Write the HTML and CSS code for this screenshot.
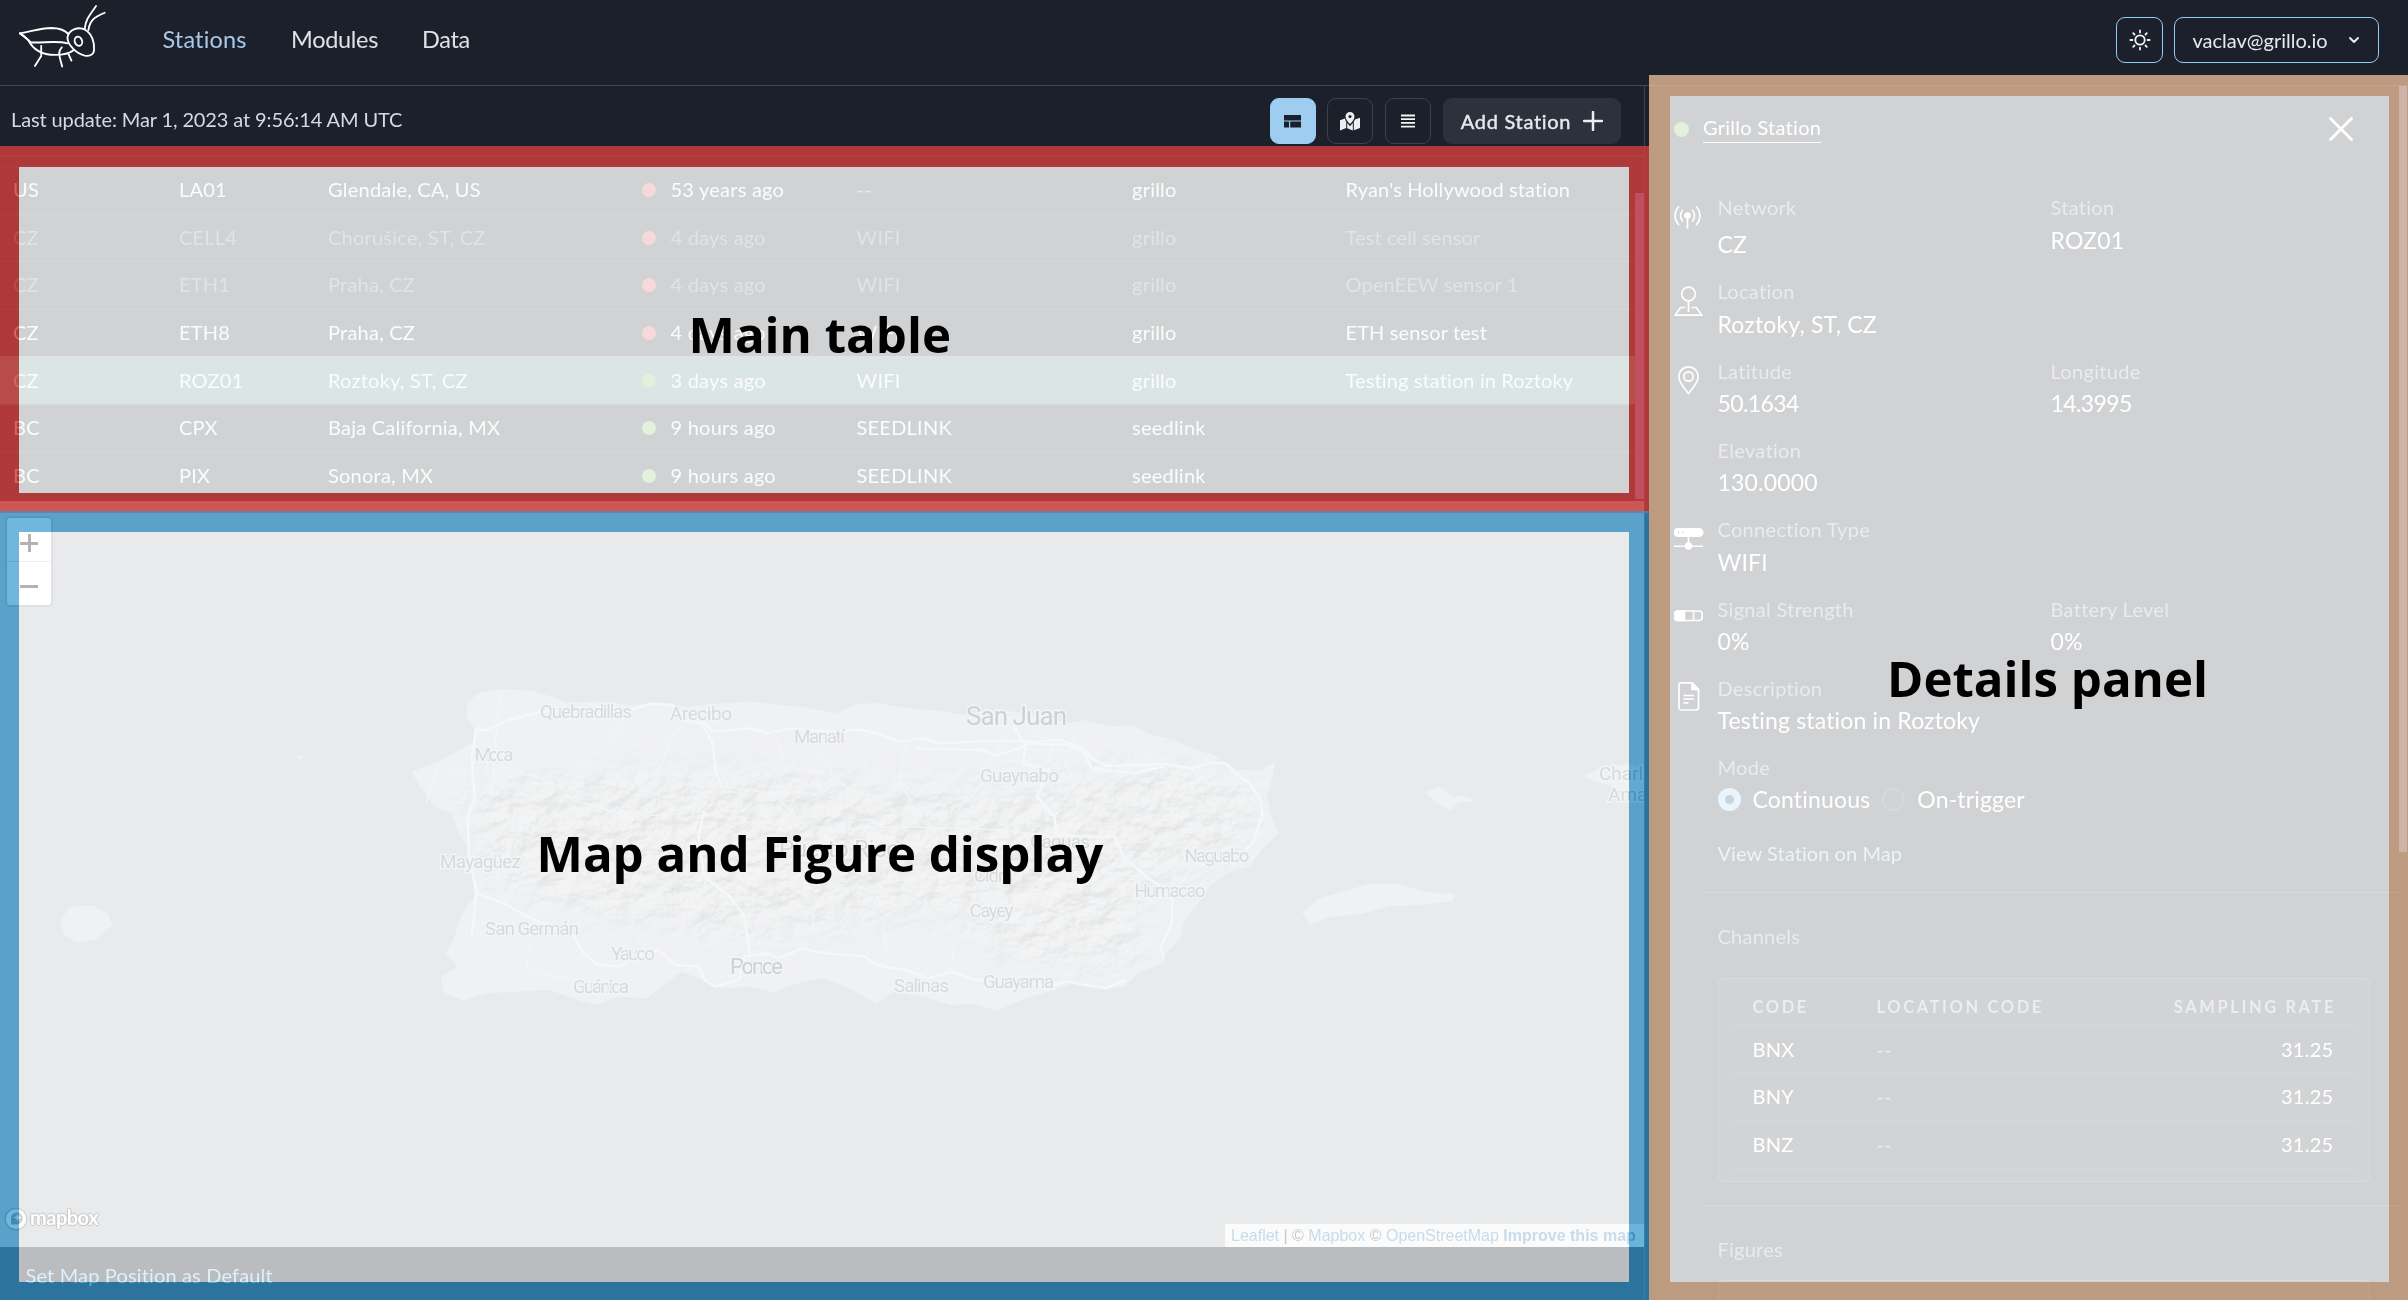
FILE: index.html
```html
<!DOCTYPE html>
<html lang="en">
<head>
<meta charset="utf-8">
<title>Stations</title>
<link rel="stylesheet" href="styles.css">
</head>
<body>
<div class="app">
  <header class="topbar">
    <svg class="logo" viewBox="0 0 340 210" fill="none" stroke="#fff" stroke-width="5.5" stroke-linecap="round" stroke-linejoin="round">
      <path d="M60 100C100 93 120 85 155 84C185 84 198 94 206 102"/>
      <path d="M60 100C75 108 82 119 92 127C125 130 170 121 203 130"/>
      <path d="M60 100L85 120C100 150 130 165 165 165C190 165 210 160 221 151"/>
      <path d="M203 112C206 90 235 78 256 89C277 101 285 128 283 150C282 166 268 169 255 167C233 163 202 136 203 112Z"/>
      <ellipse cx="236" cy="124" rx="11" ry="14" transform="rotate(-20 236 124)"/>
      <path d="M255 86C258 58 268 48 289 18M266 90C270 62 282 52 315 38"/>
      <path d="M124 138V168L105 198M186 142C173 155 178 165 187 200M205 160L215 182"/>
    </svg>
    <nav class="nav">
      <a class="nav-item active">Stations</a>
      <a class="nav-item modules">Modules</a>
      <a class="nav-item data">Data</a>
    </nav>
    <button class="outline-btn square">
      <svg width="22" height="22" viewBox="0 0 22 22" fill="none" stroke="#f2f4f6" stroke-width="1.8" stroke-linecap="round"><circle cx="11" cy="11" r="4.7"/><path d="M11 1.4v2M11 18.6v2M1.4 11h2M18.6 11h2M4.2 4.2l1.3 1.3M16.5 16.5l1.3 1.3M4.2 17.8l1.3-1.3M16.5 5.5l1.3-1.3"/></svg>
    </button>
    <button class="outline-btn account"><span>vaclav@grillo.io</span>
      <svg width="12" height="8" viewBox="0 0 12 8" fill="none" stroke="#e8eaed" stroke-width="2" stroke-linecap="round" stroke-linejoin="round"><path d="M2 2l4 4 4-4"/></svg>
    </button>
  </header>

  <div class="body">
    <main class="main">
      <div class="toolbar">
        <p class="updated">Last update: Mar 1, 2023 at 9:56:14 AM UTC</p>
        <button class="view-btn on"><svg width="17" height="13" viewBox="0 0 17 13" fill="#1a202c"><path d="M0 0h17v5.6H0zM0 6.6h5v6H0zM6.2 6.6H17v6H6.2z"/></svg></button>
        <button class="view-btn"><svg width="20" height="19" viewBox="0 0 20 19" fill="#eceef0"><path fill-rule="evenodd" d="M10 0a4.5 4.5 0 0 1 4.5 4.500C14.500 7.300 12 10 10 12 8 10 5.500 7.300 5.500 4.500A4.500 4.500 0 0 1 10 0zm0 2.900a1.600 1.600 0 1 0 0 3.200 1.600 1.600 0 0 0 0-3.200z"/><path d="M0 8.200L4.900 6.400C5.300 7.900 6 9.200 6.200 9.600V16L0 18.400zM7.200 11.100L10 14.200l2.800-3.100v7.300L7.200 16.200zM13.800 9.700L15 7.600l5-1.900V16l-6.200 2.300z"/></svg></button>
        <button class="view-btn"><svg width="14" height="14" viewBox="0 0 14 14" stroke="#f2f4f6" stroke-width="1.800"><path d="M0 1.500h14M0 5.200h14M0 8.900h14M0 12.600h14"/></svg></button>
        <button class="add-btn"><span>Add Station</span><svg width="20" height="20" viewBox="0 0 20 20" stroke="#eceef0" stroke-width="2.500" stroke-linecap="round"><path d="M10 1v18M1 10h18"/></svg></button>
      </div>

      <div class="table">
        <div class="thead"></div>
        <div class="row"><span>US</span><span>LA01</span><span>Glendale, CA, US</span><i class="dot bad"></i><span>53 years ago</span><span class="faint">--</span><span>grillo</span><span>Ryan's Hollywood station</span></div>
        <div class="row off"><span>CZ</span><span>CELL4</span><span>Chorušice, ST, CZ</span><i class="dot bad"></i><span>4 days ago</span><span>WIFI</span><span>grillo</span><span>Test cell sensor</span></div>
        <div class="row off"><span>CZ</span><span>ETH1</span><span>Praha, CZ</span><i class="dot bad"></i><span>4 days ago</span><span>WIFI</span><span>grillo</span><span>OpenEEW sensor 1</span></div>
        <div class="row"><span>CZ</span><span>ETH8</span><span>Praha, CZ</span><i class="dot bad"></i><span>4 days ago</span><span>WIFI</span><span>grillo</span><span>ETH sensor test</span></div>
        <div class="row selected"><span>CZ</span><span>ROZ01</span><span>Roztoky, ST, CZ</span><i class="dot ok"></i><span>3 days ago</span><span>WIFI</span><span>grillo</span><span>Testing station in Roztoky</span></div>
        <div class="row"><span>BC</span><span>CPX</span><span>Baja California, MX</span><i class="dot ok"></i><span>9 hours ago</span><span>SEEDLINK</span><span>seedlink</span><span></span></div>
        <div class="row"><span>BC</span><span>PIX</span><span>Sonora, MX</span><i class="dot ok"></i><span>9 hours ago</span><span>SEEDLINK</span><span>seedlink</span><span></span></div>
        <div class="thumb table-thumb"></div>
      </div>

      <div class="map">
        <svg class="canvas" viewBox="0 501 1644 746" preserveAspectRatio="none">
          <defs>
            <filter id="relief" x="0" y="0" width="100%" height="100%" color-interpolation-filters="sRGB">
              <feTurbulence type="fractalNoise" baseFrequency="0.04 0.05" numOctaves="5" seed="8"/>
              <feColorMatrix values="0 0 0 0 0  0 0 0 0 0  0 0 0 0 0  1 0 0 0 0"/>
              <feDiffuseLighting surfaceScale="9" lighting-color="#fff"><feDistantLight azimuth="235" elevation="55"/></feDiffuseLighting>
            </filter>
            <filter id="soft"><feGaussianBlur stdDeviation="22"/></filter>
            <path id="land" d="M20 305L65 275 100 245 128 215 130 175 115 140 118 100 135 70 175 57 230 62 265 80 290 100 340 95 400 105 450 98 500 110 560 100 610 95 660 105 700 110 760 130 790 105 830 98 880 115 940 122 985 135 1050 120 1120 140 1165 160 1190 150 1240 170 1275 165 1310 195 1350 210 1380 235 1410 250 1435 275 1460 300 1500 300 1525 275 1520 320 1510 380 1520 450 1530 490 1500 540 1480 590 1440 610 1410 650 1390 700 1365 760 1360 800 1335 850 1330 880 1290 905 1260 950 1210 955 1170 940 1140 960 1090 985 1040 1022 1000 1000 960 1005 910 980 860 965 830 1002 790 960 740 925 700 935 650 967 610 950 560 955 530 930 490 905 455 950 430 985 380 980 340 1005 310 990 260 960 200 965 150 970 110 992 75 965 72 920 100 890 80 850 95 800 105 740 130 680 125 600 120 540 100 480 90 430 60 410 35 350Z"/>
            <clipPath id="coast"><use href="#land" transform="translate(400 670) scale(.574 .3333)"/></clipPath>
            <mask id="hills" maskUnits="userSpaceOnUse" x="400" y="670" width="900" height="350">
              <g fill="#fff" filter="url(#soft)"><path d="M450 780L700 770 1000 790 1160 760 1260 790 1250 850 1130 900 1150 970 1000 960 960 910 760 940 600 920 500 890Z"/></g>
            </mask>
          </defs>
          <rect x="0" y="501" width="1644" height="746" fill="#b6babe"/>
          <g fill="#cdd0d4">
            <use href="#land" transform="translate(400 670) scale(.574 .3333)"/>
            <path d="M60 921L70 907 92 905 108 914 112 925 96 940 76 942 64 934ZM1302 912L1320 898 1350 890 1366 884 1400 884 1425 892 1455 894 1452 901 1420 905 1390 906 1362 914 1330 917 1310 925ZM1425 792L1440 787 1452 796 1470 797 1473 801 1458 803 1450 811 1436 802ZM1584 776L1600 768 1625 764 1644 768V800L1625 796 1612 786 1596 782ZM296 757l5-2 3 3-4 2z"/>
          </g>
          <g clip-path="url(#coast)"><g mask="url(#hills)"><rect class="relief" x="400" y="670" width="900" height="350" filter="url(#relief)"/></g></g>
          <g class="roads" transform="translate(400 670) scale(.574 .3333)">
            <path d="M135 180L150 180 190 150 250 125 320 120 350 150 380 130 440 100 475 105 490 150 530 160 545 185 610 175 640 190 680 175 740 185 800 178 840 195 870 215 910 205 940 220 1000 215 1050 212 1110 215 1150 210 1190 235 1205 265 1230 288 1330 282 1380 295 1410 280 1440 280 1455 310 1480 340 1500 390 1502 440 1485 520 1470 545"/>
            <path d="M133 175L125 260 130 380 118 440 120 560 133 660 125 800M133 670L180 700 240 755 300 790 320 850 345 885 385 890 410 860 450 840 480 885 520 890 530 930 550 950 590 930 600 860 640 850 660 865 700 835 740 850 810 860 830 885 880 900 920 925 960 905 1000 930 1060 935 1130 950 1160 935 1230 955 1265 930M525 160L545 220 550 300 560 350M530 420L520 500 530 620 575 680 600 740 610 860M900 235L1010 240 1040 255 1070 240 1100 220 1160 225 1190 245 1205 295 1280 310 1330 290M1070 170L1090 230 1085 280 1130 300 1110 380 1140 440 1145 495 1200 500 1245 500 1260 560 1300 620 1345 670 1345 760 1325 830 1330 860"/>
            <path class="minor" d="M1117 160L1105 200 1140 210 1130 270 1150 300M1050 190L1040 250 1010 300M1080 240L1225 240M1170 180L1175 230 1155 260 1170 320M1100 270L1050 275M400 130L370 200 345 250M495 160L470 210 455 290 440 350M280 350L300 390 400 440 500 430M280 350L250 330 180 290M655 200L670 290 740 310M735 250L755 320 790 370M880 230L870 340 890 390M990 390L1020 330M1145 500L1050 480 880 470 740 480M1130 600L1080 690 1000 760 965 830 960 905M130 760H190L260 760M225 830L220 900 300 930M830 640L920 620 1130 590 1200 600 1290 620M560 350L650 370 700 460M720 800L720 720 750 690M1380 590L1360 640 1350 670M1275 230L1265 290M45 400L65 290 125 310M840 770L850 850M160 380L170 130 175 70"/>
          </g>
          <g class="towns">
            <text x="540" y="717.500" textLength="92">Quebradillas</text>
            <text x="670" y="720" textLength="62">Arecibo</text>
            <text x="794" y="743" textLength="51">Manatí</text>
            <text class="city" x="966" y="725" textLength="101">San Juan</text>
            <text x="474.500" y="761" textLength="39">Moca</text>
            <text x="980" y="782" textLength="79">Guaynabo</text>
            <text x="440" y="868" textLength="81">Mayagüez</text>
            <text class="region" x="779" y="857" textLength="121">Puerto Rico</text>
            <text x="1030" y="848" textLength="60">Caguas</text>
            <text x="974" y="882" textLength="39">Cidra</text>
            <text x="969.500" y="917" textLength="44">Cayey</text>
            <text x="1184.500" y="862" textLength="65">Naguabo</text>
            <text x="1134.500" y="897" textLength="71">Humacao</text>
            <text x="485" y="935" textLength="94">San Germán</text>
            <text x="611" y="960" textLength="44">Yauco</text>
            <text class="town-lg" x="730" y="973.500" textLength="53">Ponce</text>
            <text x="573" y="993" textLength="56">Guánica</text>
            <text x="894" y="992" textLength="55">Salinas</text>
            <text x="983" y="988" textLength="71">Guayama</text>
            <text x="1599" y="780">Charlotte</text>
            <text x="1608" y="801">Amalie</text>
          </g>
        </svg>
        <div class="zoom"><span class="plus"></span><span></span></div>
        <div class="brand">
          <svg width="24" height="24" viewBox="0 0 24 24"><circle cx="12" cy="12" r="10.800" fill="#fff" stroke="#777" stroke-width="1.400"/><path fill="#666" d="M7 17.500V10a6 6 0 1 1 5.500 7.500z"/><path fill="#fff" d="M13.500 6.500l1.200 2.800 2.800 1.200-2.800 1.200-1.200 2.800-1.200-2.800-2.800-1.200 2.800-1.200z"/></svg>
          <span>mapbox</span>
        </div>
        <div class="credit"><a>Leaflet</a> | © <a>Mapbox</a> © <a>OpenStreetMap</a> <a class="strong">Improve this map</a></div>
      </div>
      <footer class="map-footer">Set Map Position as Default</footer>
    </main>

    <aside class="details">
      <div class="details-head">
        <i class="dot ok"></i><span class="station-link">Grillo Station</span>
        <svg class="close" width="24" height="24" viewBox="0 0 24 24" stroke="#fff" stroke-width="2.800" stroke-linecap="round"><path d="M1.500 1.500l21 21M22.500 1.500l-21 21"/></svg>
      </div>
      <div class="field first">
        <svg class="ic" viewBox="0 0 30 30" fill="none" stroke="#fff" stroke-width="1.700" stroke-linecap="round"><circle cx="13.500" cy="10.500" r="3.300" fill="#fff" stroke="none"/><path d="M13.500 12v11M8.500 5.500a8 8 0 0 0 0 10.500M18.500 5.500a8 8 0 0 1 0 10.500M4.500 2a13 13 0 0 0 0 17.500M22.500 2a13 13 0 0 1 0 17.500"/></svg>
        <div><label>Network</label><p class="low">CZ</p></div><div><label>Station</label><p>ROZ01</p></div>
      </div>
      <div class="field">
        <svg class="ic" viewBox="0 0 30 30" fill="none" stroke="#fff" stroke-width="1.700"><circle cx="14.500" cy="8" r="6.800"/><path d="M14.500 15v11M11.500 21.500H6.500L1.300 29.100H27.700L22.500 21.500H17.500"/></svg>
        <div><label>Location</label><p>Roztoky, ST, CZ</p></div>
      </div>
      <div class="field">
        <svg class="ic" viewBox="0 0 30 30" fill="none" stroke="#fff" stroke-width="1.700"><path d="M14.500 28.500C8 21 4.800 16.500 4.800 11.500a9.700 9.700 0 0 1 19.400 0C24.200 16.500 21 21 14.500 28.500Z"/><circle cx="14.500" cy="11.500" r="4.700"/></svg>
        <div><label>Latitude</label><p class="digits">50.1634</p></div><div><label>Longitude</label><p class="digits">14.3995</p></div>
      </div>
      <div class="field"><div class="at-text"><label>Elevation</label><p>130.0000</p></div></div>
      <div class="field">
        <svg class="ic" viewBox="0 0 30 30" fill="#fff"><path fill-rule="evenodd" d="M4 4H25a4 4 0 0 1 0 9H4a4 4 0 0 1 0-9zM4 7.800v1.400h1.400V7.800zM8 7.800v1.400h1.400V7.800z"/><path d="M13.600 12h1.600v7h-1.600zM0 21.400h29v1.700H0z"/><circle cx="14.500" cy="22" r="3.700"/></svg>
        <div><label>Connection Type</label><p>WIFI</p></div>
      </div>
      <div class="field">
        <svg class="ic" viewBox="0 0 30 30" fill="none" stroke="#fff" stroke-width="1.600"><rect x=".8" y="8" width="27.400" height="9.500" rx="3"/><path d="M19.500 8v9.500"/><path fill="#fff" d="M3.500 8H10.500V17.500H3.500Q1 17.500 1 15V10Q1 8 3.500 8Z"/></svg>
        <div><label>Signal Strength</label><p>0%</p></div><div><label>Battery Level</label><p>0%</p></div>
      </div>
      <div class="field">
        <svg class="ic" viewBox="0 0 30 30" fill="none" stroke="#fff" stroke-width="1.700" stroke-linejoin="round"><path d="M7 .9H18L24.500 7.500V25.500a2.500 2.500 0 0 1-2.500 2.500H7.500A2.500 2.500 0 0 1 5 25.500V3A2 2 0 0 1 7 .9Z"/><path fill="#fff" d="M18 1V7.500h6.500z"/><path d="M9.500 13.500h10.500M9.500 17h10.500M9.500 20.800h5"/></svg>
        <div><label>Description</label><p>Testing station in Roztoky</p></div>
      </div>
      <div class="field mode"><div class="at-text"><label>Mode</label>
        <div class="radios"><i class="radio checked"></i><p>Continuous</p><i class="radio"></i><p>On-trigger</p></div></div></div>
      <a class="view-link">View Station on Map</a>
      <section class="section">
        <h3>Channels</h3>
        <div class="card channels">
          <div class="ch head"><span>CODE</span><span>LOCATION CODE</span><span>SAMPLING RATE</span></div>
          <div class="ch"><span>BNX</span><span class="faint">--</span><span>31.25</span></div>
          <div class="ch"><span>BNY</span><span class="faint">--</span><span>31.25</span></div>
          <div class="ch"><span>BNZ</span><span class="faint">--</span><span>31.25</span></div>
        </div>
      </section>
      <section class="section figures">
        <h3>Figures</h3>
        <div class="card figure"></div>
      </section>
      <div class="thumb details-thumb"></div>
    </aside>
  </div>

  <div class="note note-table"><h2>Main table</h2></div>
  <div class="note note-map"><h2>Map and Figure display</h2></div>
  <div class="note note-details"><h2>Details panel</h2></div>
</div>
</body>
</html>
```
FILE: styles.css
```css
* { box-sizing: border-box; margin: 0; }
body {
  background: #1c202b;
  color: #e6e9ee;
  font: 400 20px/24px Lato, "Open Sans", sans-serif;
  letter-spacing: .23px;
}
.app { position: relative; width: 2408px; height: 1300px; overflow: hidden; display: flex; flex-direction: column; }
button { font: inherit; letter-spacing: inherit; color: inherit; padding: 0; background: none; display: flex; align-items: center; justify-content: center; }

/* Top bar */
.topbar { height: 86px; flex: none; display: flex; align-items: flex-start; border-bottom: 1px solid #3a4a61; padding-right: 29px; }
.logo { width: 113px; height: 70px; }
.nav { flex: 1; display: flex; padding: 24px 0 0 49.500px; font-size: 23.5px; line-height: 30px; letter-spacing: .15px; color: #e0e2e5; }
.nav-item.active { color: #a9c8ea; width: 128.500px; }
.modules { width: 131px; letter-spacing: -.3px; }
.data { letter-spacing: -.3px; }
.outline-btn { height: 46px; margin-top: 17px; border: 1.500px solid #90cdf4; border-radius: 9px; }
.square { width: 47px; margin-right: 11px; }
.account { width: 205px; gap: 20px; padding-right: 1px; letter-spacing: 0; }
.account span { margin-bottom: 1px; }

/* Columns */
.body { flex: 1; min-height: 0; display: flex; }
.main { width: 1645px; flex: none; border-right: 1px solid #34445a; display: flex; flex-direction: column; }
.toolbar { height: 69px; flex: none; display: flex; padding: 12px 23px 0 11px; }
.updated { flex: 1; padding-top: 9px; letter-spacing: -.12px; color: #d5dae2; }
.view-btn { width: 46px; height: 46px; margin-right: 11.800px; border: 1.500px solid #3b404b; border-radius: 9px; }
.view-btn.on { background: #9fcdf1; border-color: #9fcdf1; }
.add-btn { width: 178px; height: 46px; border: 0; border-radius: 9px; background: #2d313c; gap: 12px; letter-spacing: .7px; -webkit-text-stroke: .4px; }
.add-btn span { margin-bottom: 1px; }

/* Station table */
.table { position: relative; height: 346px; flex: none; overflow: hidden; border-top: 2px solid #353b47; }
.thead { height: 9px; }
.row {
  height: 47.600px; display: grid; align-items: center;
  grid-template-columns: 166px 149px 314px 28.500px 186px 275.500px 213.500px 1fr;
  margin-right: 9px; padding-left: 13px; border-top: 1px solid #343945; color: #ebedf0;
}
.row span { position: relative; top: -1px; }
.row span:last-child { letter-spacing: .12px; }
.row.off { color: #6f737b; }
.row.selected { background: #4a7c7a; border-top-color: #4a7c7a; }
.faint { color: #999; }
.dot { width: 14px; height: 14px; border-radius: 50%; display: block; }
.bad { background: #dc4141; }
.ok { background: #69b950; }
.thumb { position: absolute; right: 0; width: 9px; background: #6e96ed; }
.table-thumb { top: 36px; height: 306px; }

/* Map */
.map { position: relative; flex: 1; min-height: 0; }
.canvas { display: block; width: 100%; height: 100%; }
.relief { mix-blend-mode: multiply; opacity: .24; }
.roads path { fill: none; stroke: #e2e5e8; stroke-width: 2.400; vector-effect: non-scaling-stroke; stroke-linejoin: round; }
.roads .minor { stroke: #d9dce0; stroke-width: 1.300; }
.towns { font: 400 19px Roboto, sans-serif; letter-spacing: 0; fill: #7c8085; stroke: #d6d9dc; stroke-width: 3px; paint-order: stroke; }
.towns .city { font-size: 26px; fill: #5d6166; }
.towns .town-lg { font-size: 22px; fill: #5d6166; }
.towns .region { font-size: 24px; }
.zoom { position: absolute; left: 5px; top: 15px; width: 48px; border: 2px solid #95999d; border-radius: 5px; background: #fff; }
.zoom span { display: flex; height: 43px; align-items: center; justify-content: center; }
.zoom span + span { border-top: 1px solid #ccc; height: 44px; }
.zoom span::before { content: ""; width: 18px; height: 3px; background: #000; }
.zoom .plus::before { height: 18px; background: linear-gradient(#000, #000) center/18px 3px no-repeat, linear-gradient(#000, #000) center/3px 18px no-repeat; margin-top: 7px; }
.zoom span + span::before { margin-top: 6px; }
.brand { position: absolute; left: 4px; bottom: 16px; display: flex; align-items: center; gap: 2px; height: 25px; }
.brand span { color: #fff; font-size: 20px; font-weight: 700; letter-spacing: -.5px; padding-bottom: 4px; text-shadow: 1px 0 1px #444, -1px 0 1px #444, 0 1px 1px #444, 0 -1px 1px #444; }
.credit { position: absolute; right: 0; bottom: 0; height: 23px; width: 419px; padding-left: 6px; background: rgb(255 255 255 / .8); font: 16px/24px "Liberation Sans", Arial, sans-serif; letter-spacing: 0; color: #444; white-space: nowrap; }
.credit a { color: #4489b8; }
.credit .strong { font-weight: 700; }
.map-footer { height: 53px; flex: none; padding: 15.500px 0 0 25.500px; color: #90cdf4; letter-spacing: .15px; }

/* Details panel */
.details { position: relative; flex: 1; overflow: hidden; padding-left: 29px; color: #fff; }
.details-head { display: flex; align-items: flex-start; height: 110px; }
.details-head .dot { width: 15px; height: 15px; margin-top: 36px; }
.station-link { margin-left: 14px; padding: 29px 0 3px; border-bottom: 1.500px solid #fff; letter-spacing: .28px; }
.close { margin: 31px 55px 0 auto; }
.field { display: grid; grid-template-columns: 43.500px 333px 1fr; height: 79.300px; }
.field.first { height: 84px; }
.field.mode { height: 85.200px; }
.ic { width: 30px; height: 30px; margin-top: 5.900px; }
.first .ic { margin-top: 9.300px; }
.at-text { grid-column: 2 / 4; }
label, h3 { display: block; font: inherit; color: #9a9da3; }
label { position: relative; top: -.7px; letter-spacing: .3px; }
.field p { margin-top: 5.700px; font-size: 23px; line-height: 28px; letter-spacing: .17px; white-space: nowrap; }
.field .low { margin-top: 10px; }
.field .digits { letter-spacing: -.6px; }
.radios { display: flex; align-items: center; }
.radio { width: 23px; height: 23px; border-radius: 50%; border: 2.500px solid #383d48; margin-top: 6px; }
.radio.checked { border: 7.500px solid #90cdf4; background: #1c202b; }
.radios p { margin-left: 12px; margin-right: 12px; }
.view-link { display: block; height: 50.700px; margin-left: 43.500px; color: #90cdf4; letter-spacing: .07px; }
.section { margin: 0 8px 0 29px; border-top: 1.500px solid #3c4049; padding: 31px 30.500px 0 14.500px; height: 313px; }
.card { border: 1.500px solid #444954; border-radius: 6px; background: #21252f; }
.channels { height: 204px; margin-top: 30px; padding: 0 11px; }
.ch { display: grid; grid-template-columns: 124px 1fr 1fr; height: 47.600px; align-items: center; padding: 0 24px 2px 23px; border-bottom: 1px solid #343945; letter-spacing: .3px; }
.ch span:last-child { text-align: right; }
.ch .faint { color: #a4a7ac; }
.ch.head { align-items: end; padding-bottom: 6px; font-size: 16.500px; font-weight: 700; letter-spacing: 2.600px; color: #a4a7ac; white-space: nowrap; }
.ch.head span:last-child { margin-right: -2.600px; }
.figure { height: 60px; margin-top: 19px; }
.details-thumb { height: 766px; top: 0; width: 8px; right: 1px; }

/* Annotations: translucent frames with a lighter inside */
.note { position: absolute; display: flex; background-clip: padding-box; }
.note h2 { font: 700 49.200px/60px "Open Sans", sans-serif; letter-spacing: 0; color: #000; white-space: nowrap; }
.note-table { left: 0; top: 146px; width: 1649px; height: 367px; border: solid rgb(212 62 60 / .8); border-width: 21px 20.500px 20.500px 19.500px; background-color: rgb(255 255 255 / .8); padding: 137px 0 0 669.500px; }
.note-map { left: 0; top: 511px; width: 1649px; height: 789px; border: solid rgb(51 153 206 / .7); border-width: 21px 20px 18px 19px; background-color: rgb(255 255 255 / .7); padding: 291px 0 0 517.500px; }
.note-details { left: 1649px; top: 75px; width: 759px; height: 1225px; border: solid rgb(229 186 150 / .8); border-width: 21px 19px 18px 21px; background-color: rgb(255 255 255 / .8); padding: 552px 0 0 217px; }
```
